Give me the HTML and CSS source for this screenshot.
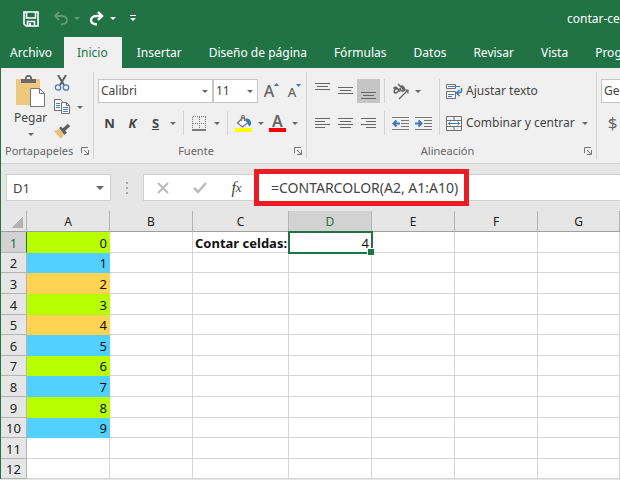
FILE: index.html
```
<!DOCTYPE html>
<html lang="es">
<head>
    <meta charset="UTF-8">
    <meta name="viewport" content="width=device-width, initial-scale=1.0">
    <title>contar-celdas</title>
    <link rel="stylesheet" href="styles.css">
</head>
<body>
    <header class="titlebar">
        <button class="quick" aria-label="Guardar">
            <svg width="16" height="16" viewBox="0 0 16 16" fill="none" stroke="#fff" stroke-width="1.6"><path d="M1 1h14v14H3l-2-2zM3.500 1v6h9V1M4.500 15v-4.500h7V15"/><path d="M7 12v3" stroke-width="2"/></svg>
        </button>
        <button class="quick undo" aria-label="Deshacer" disabled>
            <svg width="16" height="16" viewBox="0 0 16 16" fill="none" stroke="#5b9b78" stroke-width="2"><path d="M6 1L2 5l4 4M2 5h7c3 0 5 2 5 4.500S12 13 8 13.500"/></svg>
            <span class="caret"></span>
        </button>
        <button class="quick redo" aria-label="Rehacer">
            <svg width="16" height="16" viewBox="0 0 16 16" fill="none" stroke="#fff" stroke-width="2.400"><path d="M9 1l4 4-4 4M14 5H7C4 5 2 7 2 9.500S4 13 8 13.500"/></svg>
            <span class="caret"></span>
        </button>
        <button class="quick" aria-label="Personalizar barra">
            <svg width="6" height="7" viewBox="0 0 6 7"><path d="M0 0h6v1H0zM0 3h6L3 6z" fill="#fff"/></svg>
        </button>
        <span class="filename">contar-celdas</span>
    </header>

    <nav class="tabs">
        <a href="#" class="file">Archivo</a>
        <a href="#" class="active">Inicio</a>
        <a href="#">Insertar</a>
        <a href="#">Diseño de página</a>
        <a href="#">Fórmulas</a>
        <a href="#">Datos</a>
        <a href="#">Revisar</a>
        <a href="#">Vista</a>
        <a href="#">Programador</a>
    </nav>

    <section class="ribbon">
        <div class="group clipboard">
            <div class="controls">
                <button class="paste">
                    <svg width="31" height="33" viewBox="0 0 31 33"><path d="M1 4h24v26H1z" fill="#edc87e"/><path d="M6 8V4h4V2l2-2h3l2 2v2h4v4z" fill="#6a6a6a"/><path d="M12 2h3v2h-3z" fill="#f0f0f0"/><path d="M15.500 13.500h9l5 5v13h-14z" fill="#fff" stroke="#777"/><path d="M24.500 13.500v5h5" fill="none" stroke="#777"/></svg>
                    Pegar
                    <span class="caret"></span>
                </button>
                <div class="clip-tools">
                    <button aria-label="Cortar">
                        <svg width="16" height="16" viewBox="0 0 16 16" fill="none"><path d="M4 0l6 10M12 0L6 10" stroke="#606060" stroke-width="2"/><circle cx="4" cy="12.500" r="2.700" stroke="#4a7eba" stroke-width="1.300"/><circle cx="12" cy="12.500" r="2.700" stroke="#4a7eba" stroke-width="1.300"/></svg>
                    </button>
                    <button aria-label="Copiar">
                        <svg width="17" height="16" viewBox="0 0 17 16" fill="#fff" stroke="#707070"><path d="M.5.500h6l2 2v9h-8z"/><path d="M2 4.500h4M2 6.500h4M2 8.500h4" stroke="#4a7eba"/><path d="M7.500 3.500h5l3 3v8h-8z"/><path d="M12.500 3.500v3h3" fill="none"/><path d="M9 8.500h5M9 10.500h5M9 12.500h5" stroke="#4a7eba"/></svg>
                        <span class="caret"></span>
                    </button>
                    <button aria-label="Copiar formato">
                        <svg width="17" height="16" viewBox="0 0 17 16"><path d="M0 8l5-2 5 5-2 4H6z" fill="#edc07a"/><path d="M5 5l2-1.500 6 6L10.500 12z" fill="#606060"/><path d="M9.500 7L15 2" stroke="#606060" stroke-width="3.500"/></svg>
                    </button>
                </div>
            </div>
            <div class="group-label"><span>Portapapeles</span>
                <button aria-label="Opciones de portapapeles"><svg width="8" height="8" viewBox="0 0 8 8" fill="none" stroke="#777"><path d="M.5 6V.500H7M3 3l4 4M7.500 3v4.500H3"/></svg></button>
            </div>
        </div>

        <div class="group font">
            <div class="controls">
                <div class="tools">
                    <div class="combo font-name">
                        <select aria-label="Fuente"><option>Calibri</option></select>
                    </div>
                    <div class="combo font-size">
                        <select aria-label="Tamaño de fuente"><option>11</option></select>
                    </div>
                    <button class="tool grow" aria-label="Aumentar tamaño">A<svg width="5" height="3" viewBox="0 0 5 3"><path d="M0 3h5L2.500 0z" fill="#3c78b4"/></svg></button>
                    <button class="tool shrink" aria-label="Disminuir tamaño">A<svg width="5" height="3" viewBox="0 0 5 3"><path d="M0 0h5L2.500 3z" fill="#3c78b4"/></svg></button>
                </div>
                <div class="tools">
                    <button class="tool bold">N</button>
                    <button class="tool italic">K</button>
                    <button class="tool underline">S</button>
                    <button class="drop" aria-label="Más subrayados"><span class="caret"></span></button>
                    <span class="rule"></span>
                    <button class="tool" aria-label="Bordes">
                        <svg width="15" height="15" viewBox="0 0 15 15" fill="none" stroke="#777"><path d="M1 .500h13M1 7.500h13M.5 1v12M7.500 1v12M13.500 1v12" stroke-dasharray="1 1"/><path d="M0 14h14" stroke="#555" stroke-width="1.500"/></svg>
                    </button>
                    <button class="drop" aria-label="Más bordes"><span class="caret"></span></button>
                    <span class="rule"></span>
                    <button class="tool" aria-label="Color de relleno">
                        <svg width="17" height="17" viewBox="0 0 17 17" fill="none"><path d="M2.500 8L8 2.500l5 5L7.500 12z" fill="#fff" stroke="#777" stroke-width="1.300"/><path d="M6.500 6V2q0-1.500 1.500-1.500T9.500 2v4" stroke="#777" stroke-width="1.200"/><path d="M10.500 3.500c4-.5 6 2 5.500 6l-2 2z" fill="#3c78b4"/><path d="M0 13h17v4H0z" fill="#ff0"/></svg>
                    </button>
                    <button class="drop" aria-label="Más rellenos"><span class="caret"></span></button>
                    <button class="tool color" aria-label="Color de fuente">A</button>
                    <button class="drop" aria-label="Más colores"><span class="caret"></span></button>
                </div>
            </div>
            <div class="group-label"><span>Fuente</span>
                <button aria-label="Opciones de fuente"><svg width="8" height="8" viewBox="0 0 8 8" fill="none" stroke="#777"><path d="M.5 6V.500H7M3 3l4 4M7.500 3v4.500H3"/></svg></button>
            </div>
        </div>

        <div class="group align">
            <div class="controls">
                <div class="align-buttons">
                    <button class="tool" aria-label="Alinear arriba"><svg width="15" height="17" viewBox="0 0 15 17" stroke="#666"><path d="M0 .500h15M2 3.500h11M0 6.500h15"/></svg></button>
                    <button class="tool" aria-label="Alinear en medio"><svg width="15" height="17" viewBox="0 0 15 17" stroke="#666"><path d="M0 4.500h15M2 7.500h11M0 10.500h15"/></svg></button>
                    <button class="tool pressed" aria-label="Alinear abajo"><svg width="15" height="17" viewBox="0 0 15 17" stroke="#666"><path d="M0 9.500h15M2 12.500h11M0 15.500h15"/></svg></button>
                    <button class="tool" aria-label="Alinear a la izquierda"><svg width="15" height="13" viewBox="0 0 15 13" stroke="#666"><path d="M0 1.500h15M0 4.500h10M0 7.500h15M0 10.500h10"/></svg></button>
                    <button class="tool" aria-label="Centrar"><svg width="15" height="13" viewBox="0 0 15 13" stroke="#666"><path d="M0 1.500h15M2 4.500h11M0 7.500h15M2 10.500h11"/></svg></button>
                    <button class="tool" aria-label="Alinear a la derecha"><svg width="15" height="13" viewBox="0 0 15 13" stroke="#666"><path d="M0 1.500h15M5 4.500h10M0 7.500h15M5 10.500h10"/></svg></button>
                </div>
                <div class="rules"><span class="rule"></span><span class="rule"></span></div>
                <div class="indent-buttons">
                    <div class="tools">
                        <button class="tool" aria-label="Orientación"><svg width="17" height="17" viewBox="0 0 17 17" fill="none" stroke="#606060" stroke-width="1.600"><path d="M1.500 5.500q2-2 3.500-.5l3 3.500M6 6Q4.500 5 3 6.500t-.5 3q1.500 1 3-.5T7 7"/><path d="M6 1l6 6M8.500 3.500q1.500-1 3 .5t.5 3.500q-2 1-3 0T8 5"/><path d="M7 16l9-9M12.500 7H16v3.500" stroke-width="1.200"/></svg></button>
                        <button class="drop" aria-label="Más orientaciones"><span class="caret"></span></button>
                    </div>
                    <div class="tools">
                        <button class="tool" aria-label="Disminuir sangría"><svg width="17" height="15" viewBox="0 0 17 15"><path d="M0 1.500h17M9 4.500h8M9 7.500h8M9 10.500h8M0 13.500h17" stroke="#777"/><path d="M8 7.500H2M4.500 4.500l-3 3 3 3" fill="none" stroke="#3c78b4" stroke-width="2"/></svg></button>
                        <button class="tool" aria-label="Aumentar sangría"><svg width="17" height="15" viewBox="0 0 17 15"><path d="M0 1.500h17M9 4.500h8M9 7.500h8M9 10.500h8M0 13.500h17" stroke="#777"/><path d="M0 7.500h6M3.500 4.500l3 3-3 3" fill="none" stroke="#3c78b4" stroke-width="2"/></svg></button>
                    </div>
                </div>
                <span class="rule long"></span>
                <div class="text-buttons">
                    <button>
                        <svg width="17" height="17" viewBox="0 0 17 17" fill="none"><path d="M.5 1.500h9v4h-9zM.5 8.500h9v7h-9z" stroke="#707070" fill="#fff"/><path d="M2 3.500h12M2 11.500h6M2 13.500h4" stroke="#3c78b4"/><path d="M15.500 5v3q0 2-4 2M13.500 7l-3 3 3 3" stroke="#3c78b4" stroke-width="1.500"/></svg>
                        Ajustar texto
                    </button>
                    <button>
                        <svg width="17" height="17" viewBox="0 0 17 17" fill="none"><path d="M.5 1.500h15v14H.500zM.5 5.500h15M.5 11.500h15M8 1.500v4M8 11.500v4" stroke="#707070"/><path d="M1 6h14v5H1z" fill="#fff"/><path d="M2 8.500h12M4.500 6.500l-2 2 2 2M11.500 6.500l2 2-2 2" stroke="#3c78b4"/></svg>
                        Combinar y centrar
                        <span class="caret"></span>
                    </button>
                </div>
            </div>
            <div class="group-label"><span>Alineación</span>
                <button aria-label="Opciones de alineación"><svg width="8" height="8" viewBox="0 0 8 8" fill="none" stroke="#777"><path d="M.5 6V.500H7M3 3l4 4M7.500 3v4.500H3"/></svg></button>
            </div>
        </div>

        <div class="group number">
            <div class="controls">
                <div class="combo format">
                    <select aria-label="Formato de número"><option>General</option></select>
                </div>
                <button class="tool currency">$</button>
            </div>
        </div>
    </section>

    <section class="formula-bar">
        <div class="name-box">
            <input type="text" value="D1" aria-label="Cuadro de nombres">
            <button aria-label="Nombres"><span class="caret"></span></button>
        </div>
        <svg class="dots" width="2" height="12" viewBox="0 0 2 12"><path d="M0 0h2v2H0zM0 5h2v2H0zM0 10h2v2H0z" fill="#aaa"/></svg>
        <div class="formula">
            <button aria-label="Cancelar"><svg width="12" height="12" viewBox="0 0 12 12" stroke="#bbb" stroke-width="2"><path d="M1 1l10 10M11 1L1 11"/></svg></button>
            <button aria-label="Introducir"><svg width="14" height="12" viewBox="0 0 14 12" fill="none" stroke="#bbb" stroke-width="2.500"><path d="M1 6l4 4 8-9"/></svg></button>
            <button class="fx" aria-label="Insertar función">f<sub>x</sub></button>
            <div class="formula-text">
                <input type="text" value="=CONTARCOLOR(A2, A1:A10)" aria-label="Barra de fórmulas">
            </div>
        </div>
    </section>

    <table class="sheet">
        <colgroup>
            <col class="col-index"><col class="col-normal"><col class="col-normal"><col class="col-wide"><col class="col-normal"><col class="col-normal"><col class="col-normal"><col>
        </colgroup>
        <thead>
            <tr><th class="corner"></th><th>A</th><th>B</th><th>C</th><th class="selected">D</th><th>E</th><th>F</th><th>G</th></tr>
        </thead>
        <tbody>
            <tr><th class="selected">1</th><td class="green">0</td><td></td><td class="label">Contar celdas:</td><td class="current">4</td><td></td><td></td><td></td></tr>
            <tr><th>2</th><td class="blue">1</td><td></td><td></td><td></td><td></td><td></td><td></td></tr>
            <tr><th>3</th><td class="orange">2</td><td></td><td></td><td></td><td></td><td></td><td></td></tr>
            <tr><th>4</th><td class="green">3</td><td></td><td></td><td></td><td></td><td></td><td></td></tr>
            <tr><th>5</th><td class="orange">4</td><td></td><td></td><td></td><td></td><td></td><td></td></tr>
            <tr><th>6</th><td class="blue">5</td><td></td><td></td><td></td><td></td><td></td><td></td></tr>
            <tr><th>7</th><td class="green">6</td><td></td><td></td><td></td><td></td><td></td><td></td></tr>
            <tr><th>8</th><td class="blue">7</td><td></td><td></td><td></td><td></td><td></td><td></td></tr>
            <tr><th>9</th><td class="green">8</td><td></td><td></td><td></td><td></td><td></td><td></td></tr>
            <tr><th>10</th><td class="blue">9</td><td></td><td></td><td></td><td></td><td></td><td></td></tr>
            <tr><th>11</th><td></td><td></td><td></td><td></td><td></td><td></td><td></td></tr>
            <tr><th>12</th><td></td><td></td><td></td><td></td><td></td><td></td><td></td></tr>
        </tbody>
    </table>
</body>
</html>
```
FILE: styles.css
```
* {
    box-sizing: border-box;
}
body {
    margin: 0;
    border-left: 1px solid #217346;
    background-color: #e6e6e6;
    color: #444;
    font-family: "Noto Sans", "Open Sans", sans-serif;
    font-size: 12px;
    line-height: 16px;
    overflow: hidden;
}
button {
    display: flex;
    align-items: center;
    justify-content: center;
    padding: 0;
    border: none;
    background: none;
    color: inherit;
    font: inherit;
    white-space: nowrap;
}
svg {
    display: block;
    flex-shrink: 0;
}
.caret {
    flex-shrink: 0;
    border: 3px solid transparent;
    border-top-color: #666;
    border-bottom: none;
}

/* title bar */
.titlebar {
    display: flex;
    align-items: center;
    height: 37px;
    padding-left: 22px;
    background-color: #217346;
    color: #fff;
}
.quick {
    gap: 5px;
    margin-right: 14px;
}
.quick .caret {
    border-top-color: #fff;
}
.undo .caret {
    border-top-color: #5b9b78;
}
.undo {
    margin-right: 9px;
}
.filename {
    width: 53px;
    margin-left: auto;
    overflow: hidden;
    white-space: nowrap;
}

/* tabs */
.tabs {
    display: flex;
    background-color: #217346;
    overflow: hidden;
}
.tabs a {
    padding: 8px 12px 7px 15px;
    color: #fff;
    text-decoration: none;
    white-space: nowrap;
}
.tabs .file {
    padding-left: 9px;
}
.tabs .active {
    padding-left: 13px;
    padding-right: 14px;
    background-color: #f0f0f0;
    color: #217346;
}

/* ribbon */
.ribbon {
    display: flex;
    background-color: #f0f0f0;
    border-bottom: 1px solid #d2d2d2;
    overflow: hidden;
}
.group {
    display: flex;
    flex-direction: column;
    flex-shrink: 0;
    justify-content: space-between;
    margin: 4px 0;
    padding: 7px 4px 0;
    border-right: 1px solid #d4d4d4;
}
.group-label {
    display: flex;
    align-items: center;
    height: 16px;
    margin-top: 8px;
    color: #666;
    font-size: 11px;
}
.group-label span {
    flex: 1;
    text-align: center;
}
.tools {
    display: flex;
    align-items: center;
    height: 24px;
}
.tool {
    width: 23px;
    height: 24px;
}
.drop {
    width: 11px;
    height: 24px;
}
.rule {
    width: 1px;
    height: 24px;
    margin: 0 4px 0 5px;
    background-color: #d4d4d4;
}
.pressed {
    background-color: #c5c5c5;
}
.combo {
    position: relative;
    height: 24px;
    border: 1px solid #c6c6c6;
    background-color: #fff;
}
.combo select {
    width: 100%;
    height: 22px;
    padding: 0 2px;
    border: none;
    appearance: none;
    background: none;
    color: #444;
    font: inherit;
}
.combo::after {
    content: "";
    position: absolute;
    top: 10px;
    right: 4px;
    border: 3px solid transparent;
    border-top-color: #666;
    border-bottom: none;
    pointer-events: none;
}

.clipboard {
    width: 93px;
    padding-top: 3px;
}
.clipboard .controls {
    display: flex;
    gap: 7px;
    padding-left: 9px;
}
.clipboard .group-label {
    margin-top: 0;
}
.clipboard .group-label span {
    text-align: left;
}
.paste {
    flex-direction: column;
    justify-content: flex-start;
    gap: 2px;
}
.paste .caret {
    margin-top: 5px;
}
.clip-tools {
    display: flex;
    flex-direction: column;
    align-items: flex-start;
    gap: 8px;
}
.clip-tools button {
    gap: 6px;
}

.font {
    width: 213px;
}
.font .controls {
    display: grid;
    gap: 8px;
}
.font-name {
    width: 115px;
}
.font-size {
    width: 45px;
}
.grow, .shrink {
    align-items: flex-start;
    padding-top: 4px;
    color: #666;
    font-size: 16px;
    font-weight: 500;
}
.grow {
    margin-left: 2px;
}
.shrink {
    padding-top: 5px;
    font-size: 13px;
}
.bold, .italic, .underline {
    font-size: 13px;
    font-weight: bold;
}
.italic {
    font-style: italic;
}
.underline {
    text-decoration: underline;
}
.color {
    width: 17px;
    height: 18px;
    margin: 0 3px;
    border-bottom: 4px solid #f00;
    color: #666;
    font-size: 16px;
    font-weight: 600;
    line-height: 14px;
}

.align {
    width: 290px;
}
.align .controls {
    display: flex;
}
.align .rule {
    margin: 0 4px;
}
.align .long {
    height: 56px;
}
.align-buttons {
    display: grid;
    grid-template-columns: repeat(3, 23px);
    row-gap: 8px;
}
.rules, .indent-buttons, .text-buttons {
    display: grid;
    row-gap: 8px;
}
.indent-buttons {
    width: 46px;
}
.text-buttons button {
    justify-content: flex-start;
    gap: 3px;
    height: 24px;
    padding-left: 2px;
}
.text-buttons .caret {
    margin-left: 4px;
}
.number .controls {
    display: grid;
    row-gap: 8px;
}
.format {
    width: 110px;
}
.currency {
    color: #666;
    font-size: 17px;
}

/* formula bar */
.formula-bar {
    display: flex;
    align-items: center;
    gap: 15px;
    padding: 10px 0 10px 5px;
}
.name-box, .formula {
    display: flex;
    align-items: center;
    height: 27px;
    border: 1px solid #cfcfcf;
    background-color: #fff;
}
.name-box {
    width: 105px;
}
.name-box input, .formula input {
    width: 100%;
    min-width: 0;
    padding: 0 0 0 6px;
    border: none;
    outline: none;
    background: none;
    color: #444;
    font: inherit;
    font-size: 13px;
}
.name-box button {
    padding: 0 6px;
}
.name-box .caret {
    border-width: 4px;
    border-bottom: none;
}
.formula {
    flex: 1;
    border-right: none;
}
.formula button {
    width: 37px;
}
.formula .fx {
    font-family: "Liberation Serif", serif;
    font-size: 16px;
    font-style: italic;
    color: #444;
}
.fx sub {
    font-size: 13px;
}
/* highlight drawn over the bar, a bit taller than it */
.formula-text {
    width: 215px;
    margin: -5px 0 -5px -1px;
    padding: 4px 0 4px 6px;
    border: 5px solid #ed1c24;
    background-color: #fff;
}
.formula .formula-text input {
    height: 19px;
    font-size: 14px;
}

/* sheet */
.sheet {
    width: 100%;
    table-layout: fixed;
    border-collapse: separate;
    border-spacing: 0;
    background-color: #fff;
    color: #111;
    font-size: 13px;
}
.col-index {
    width: 26px;
}
.col-normal {
    width: 83px;
}
.col-wide {
    width: 96px;
}
.sheet th, .sheet td {
    height: 21px;
    padding: 1px 2px 0;
    border-right: 1px solid #d4d4d4;
    border-bottom: 1px solid #d4d4d4;
    line-height: 18px;
    text-align: right;
    white-space: nowrap;
}
/* default row height is 20.6px, so two rows in five are shorter */
.sheet tbody tr:nth-child(5n + 2) > *, .sheet tbody tr:nth-child(5n) > * {
    height: 20px;
}
.sheet th {
    padding: 1px 0 0;
    border-color: #b4b4b4;
    background-color: #e6e6e6;
    color: #222;
    font-weight: normal;
    text-align: center;
}
.sheet thead th {
    border-bottom-color: #9f9f9f;
    font-size: 12px;
}
.sheet .corner {
    background-image: linear-gradient(135deg, transparent 50%, #b4b4b4 50%);
    background-size: 12px 12px;
    background-position: right 3px bottom 3px;
    background-repeat: no-repeat;
}
.sheet .selected {
    background-color: #d2d2d2;
    color: #217346;
}
.sheet tbody .selected {
    border-right-color: #217346;
}
.sheet .label {
    font-weight: bold;
}
.sheet .green {
    background-color: #b8ff00;
    border-color: #b8ff00;
}
.sheet .blue {
    background-color: #52d0ff;
    border-color: #52d0ff;
}
.sheet .orange {
    background-color: #ffd452;
    border-color: #ffd452;
}
.sheet .current {
    position: relative;
    outline: 2px solid #217346;
    outline-offset: -1px;
}
.current::after {
    content: "";
    position: absolute;
    right: -3px;
    bottom: -3px;
    width: 6px;
    height: 6px;
    border: 1px solid #fff;
    border-right: none;
    border-bottom: none;
    background-color: #217346;
}
```
